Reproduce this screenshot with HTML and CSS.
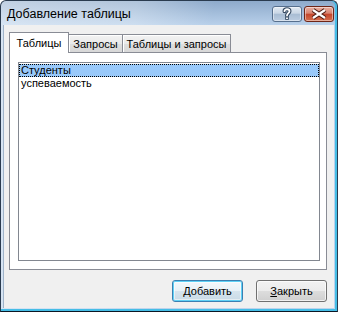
FILE: index.html
```html
<!DOCTYPE html>
<html lang="ru">
<head>
  <meta charset="UTF-8">
  <title>Добавление таблицы</title>
  <link rel="stylesheet" href="styles.css">
</head>
<body>
  <div class="window">
    <div class="titlebar">
      <span class="title">Добавление таблицы</span>
      <div class="caption-buttons">
        <div class="cap help">
          <svg width="28" height="14" viewBox="0 0 28 14">
            <path d="M11.5 4.2 C11.5 1.6 16.5 1.6 16.5 4.2 C16.5 6.2 14 6.2 14 8.6" fill="none" stroke="#33475f" stroke-width="4" stroke-linecap="round"/>
            <rect x="12.2" y="9.6" width="3.6" height="3.2" fill="#33475f"/>
            <path d="M11.5 4.2 C11.5 1.6 16.5 1.6 16.5 4.2 C16.5 6.2 14 6.2 14 8.6" fill="none" stroke="#fff" stroke-width="1.8" stroke-linecap="round"/>
            <rect x="13.1" y="10.5" width="1.8" height="1.5" fill="#fff"/>
          </svg>
        </div>
        <div class="cap close">
          <svg width="28" height="14" viewBox="0 0 28 14">
            <path d="M8 3 L20 11 M20 3 L8 11" stroke="#4a1a10" stroke-width="4.4"/>
            <path d="M8 3 L20 11 M20 3 L8 11" stroke="#fff" stroke-width="2.2"/>
          </svg>
        </div>
      </div>
    </div>

    <div class="client">
      <div class="tabs">
        <div class="tab active">Таблицы</div>
        <div class="tab tab-queries">Запросы</div>
        <div class="tab tab-both">Таблицы и запросы</div>
      </div>

      <div class="panel">
        <div class="listbox">
          <div class="item selected">Студенты</div>
          <div class="item">успеваемость</div>
        </div>
      </div>

      <div class="actions">
        <div class="button default"><u>Д</u>обавить</div>
        <div class="button"><u>З</u>акрыть</div>
      </div>
    </div>
  </div>
</body>
</html>
```

FILE: styles.css
```css
* {
  box-sizing: border-box;
}
body {
  margin: 0;
  background: #fff;
  font-family: "Liberation Sans", Arial, sans-serif;
  font-size: 11px;
  color: #000;
}
.window {
  width: 338px;
  height: 312px;
  display: flex;
  flex-direction: column;
  padding: 0 3px 3px;
  border: 1px solid #2a3b4f;
  border-bottom-color: #0c1724;
  border-radius: 6px 6px 0 0;
  background:
    linear-gradient(100deg, rgba(255,255,255,0.45), rgba(255,255,255,0.3) 35%, rgba(255,255,255,0) 55%),
    linear-gradient(#8eaacb, #b8d0ea 24px, #bcd3ec);
  box-shadow: inset -2px 0 0 #45bde6, inset 0 -2px 0 #45bde6;
}
.titlebar {
  height: 24px;
  display: flex;
  align-items: flex-start;
  padding-left: 3px;
}
.title {
  font-size: 12.5px;
  line-height: 26px;
}
.caption-buttons {
  margin-left: auto;
  margin-top: 5px;
  display: flex;
  gap: 2px;
}
.cap {
  width: 30px;
  height: 16px;
  border: 1px solid #566f8d;
  border-radius: 3px;
  box-shadow: inset 0 0 0 1px rgba(255,255,255,0.45);
}
.cap svg {
  display: block;
}
.help {
  background: linear-gradient(#e2eaf3, #c9d6e5 45%, #a8bcd3 50%, #bccde1);
}
.close {
  border-color: #6e2517;
  background: linear-gradient(#eab0a2, #d88571 45%, #c4452a 50%, #d4704f);
}
.client {
  flex: 1;
  display: flex;
  flex-direction: column;
  background: #f0f0f0;
  padding: 7px 7px 0 5px;
  box-shadow: -1px 0 0 #9fb3c9;
}
.tabs {
  display: flex;
  align-items: flex-end;
  height: 21px;
  margin-bottom: -1px;
  position: relative;
  z-index: 1;
}
.tab {
  height: 18px;
  margin-bottom: 1px;
  margin-left: -1px;
  border: 1px solid #898c95;
  border-bottom: none;
  text-align: center;
  line-height: 19px;
  background: linear-gradient(#f3f3f3, #e9e9e9 50%, #dedede 50%, #d8d8d8);
  box-shadow: inset 1px 1px 0 #fff;
}
.tab.active {
  height: 21px;
  margin: 0;
  width: 60px;
  line-height: 20px;
  background: #fff;
  box-shadow: none;
  position: relative;
  z-index: 1;
}
.tab-queries {
  width: 55px;
}
.tab-both {
  width: 109px;
}
.panel {
  background: #fff;
  border: 1px solid #898c95;
  padding: 9px 6px 8px 8px;
}
.listbox {
  height: 199px;
  border: 1px solid #828790;
  padding: 1px 0 0;
}
.item {
  height: 13px;
  line-height: 13px;
  padding-left: 2px;
  white-space: nowrap;
}
.item.selected {
  background: #99c9fa;
  outline: 1px dotted #000;
  outline-offset: -1px;
}
.actions {
  display: flex;
  justify-content: flex-end;
  gap: 13px;
  margin-top: 10px;
}
.button {
  width: 71px;
  height: 22px;
  border: 1px solid #707070;
  border-radius: 3px;
  text-align: center;
  line-height: 20px;
  background: linear-gradient(#f2f2f2, #ebebeb 50%, #dddddd 50%, #cfcfcf);
  box-shadow: inset 0 0 0 1px rgba(255,255,255,0.7);
}
.button.default {
  border-color: #3c7fb1;
  background: linear-gradient(#f4f8fb, #e8f1f7 50%, #d6e4ee 50%, #c9dae6);
  box-shadow: inset 0 0 0 1px #5fd1f6, inset 0 0 0 2px rgba(255,255,255,0.5);
}
```
